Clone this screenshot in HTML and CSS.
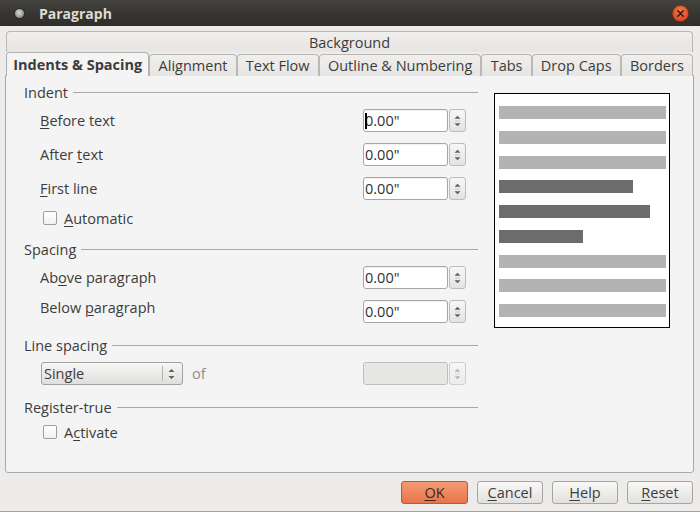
FILE: index.html
```html
<!DOCTYPE html>
<html lang="en">
<head>
<meta charset="utf-8">
<title>Paragraph</title>
<link rel="stylesheet" href="styles.css">
</head>
<body>
<div class="window">
  <header class="titlebar">
    <span class="win-dot"></span>
    <span class="title">Paragraph</span>
    <span class="close">
      <svg width="17" height="17" viewBox="0 0 17 17">
        <defs>
          <radialGradient id="cg" cx="50%" cy="35%" r="65%">
            <stop offset="0" stop-color="#f47a4e"/>
            <stop offset="1" stop-color="#d9441b"/>
          </radialGradient>
        </defs>
        <circle cx="8.5" cy="8.5" r="8" fill="url(#cg)" stroke="#8e2a0c" stroke-width="0.6"/>
        <path d="M5.8 5.8 L11.2 11.2 M11.2 5.8 L5.8 11.2" stroke="#3a1408" stroke-width="1.5" stroke-linecap="round"/>
      </svg>
    </span>
  </header>

  <main class="dialog">
    <div class="notebook">
      <div class="tabrow tabrow-back">
        <div class="tab tab-back">Background</div>
      </div>
      <div class="tabrow tabrow-front">
        <div class="tab active">Indents &amp; Spacing</div>
        <div class="tab">Alignment</div>
        <div class="tab">Text Flow</div>
        <div class="tab">Outline &amp; Numbering</div>
        <div class="tab">Tabs</div>
        <div class="tab">Drop Caps</div>
        <div class="tab">Borders</div>
      </div>

      <div class="panel">
        <div class="form">
          <section class="group">
            <h3 class="group-title">Indent</h3>
            <div class="row">
              <span class="label"><u>B</u>efore text</span>
              <div class="spin">
                <div class="spin-entry"><span class="cursor"></span>0.00"</div>
                <div class="spin-btns"><svg width="7" height="12" viewBox="0 0 7 12"><polygon points="0.5,3.8 3.5,0.8 6.5,3.8" fill="#5f5f5f"/><line x1="1" y1="6" x2="6" y2="6" stroke="#c9c9c9"/><polygon points="0.5,8.2 3.5,11.2 6.5,8.2" fill="#5f5f5f"/></svg></div>
              </div>
            </div>
            <div class="row">
              <span class="label">After <u>t</u>ext</span>
              <div class="spin">
                <div class="spin-entry">0.00"</div>
                <div class="spin-btns"><svg width="7" height="12" viewBox="0 0 7 12"><polygon points="0.5,3.8 3.5,0.8 6.5,3.8" fill="#5f5f5f"/><line x1="1" y1="6" x2="6" y2="6" stroke="#c9c9c9"/><polygon points="0.5,8.2 3.5,11.2 6.5,8.2" fill="#5f5f5f"/></svg></div>
              </div>
            </div>
            <div class="row">
              <span class="label"><u>F</u>irst line</span>
              <div class="spin">
                <div class="spin-entry">0.00"</div>
                <div class="spin-btns"><svg width="7" height="12" viewBox="0 0 7 12"><polygon points="0.5,3.8 3.5,0.8 6.5,3.8" fill="#5f5f5f"/><line x1="1" y1="6" x2="6" y2="6" stroke="#c9c9c9"/><polygon points="0.5,8.2 3.5,11.2 6.5,8.2" fill="#5f5f5f"/></svg></div>
              </div>
            </div>
            <div class="check-row">
              <span class="checkbox"></span>
              <span class="check-label"><u>A</u>utomatic</span>
            </div>
          </section>

          <section class="group">
            <h3 class="group-title">Spacing</h3>
            <div class="row">
              <span class="label">Ab<u>o</u>ve paragraph</span>
              <div class="spin">
                <div class="spin-entry">0.00"</div>
                <div class="spin-btns"><svg width="7" height="12" viewBox="0 0 7 12"><polygon points="0.5,3.8 3.5,0.8 6.5,3.8" fill="#5f5f5f"/><line x1="1" y1="6" x2="6" y2="6" stroke="#c9c9c9"/><polygon points="0.5,8.2 3.5,11.2 6.5,8.2" fill="#5f5f5f"/></svg></div>
              </div>
            </div>
            <div class="row row-top">
              <span class="label">Below <u>p</u>aragraph</span>
              <div class="spin">
                <div class="spin-entry">0.00"</div>
                <div class="spin-btns"><svg width="7" height="12" viewBox="0 0 7 12"><polygon points="0.5,3.8 3.5,0.8 6.5,3.8" fill="#5f5f5f"/><line x1="1" y1="6" x2="6" y2="6" stroke="#c9c9c9"/><polygon points="0.5,8.2 3.5,11.2 6.5,8.2" fill="#5f5f5f"/></svg></div>
              </div>
            </div>
          </section>

          <section class="group">
            <h3 class="group-title">Line spacing</h3>
            <div class="row row-combo">
              <div class="combo">
                <span class="combo-text">Single</span>
                <span class="combo-sep"></span>
                <svg class="combo-arrows" width="7" height="12" viewBox="0 0 7 12"><polygon points="0.5,4 3.5,1 6.5,4" fill="#5f5f5f"/><polygon points="0.5,8 3.5,11 6.5,8" fill="#5f5f5f"/></svg>
              </div>
              <span class="of-label">of</span>
              <div class="spin spin-disabled">
                <div class="spin-entry"></div>
                <div class="spin-btns"><svg width="7" height="12" viewBox="0 0 7 12"><polygon points="0.5,3.8 3.5,0.8 6.5,3.8" fill="#b4b4b4"/><line x1="1" y1="6" x2="6" y2="6" stroke="#dcdcdc"/><polygon points="0.5,8.2 3.5,11.2 6.5,8.2" fill="#b4b4b4"/></svg></div>
              </div>
            </div>
          </section>

          <section class="group">
            <h3 class="group-title">Register-true</h3>
            <div class="check-row">
              <span class="checkbox"></span>
              <span class="check-label">A<u>c</u>tivate</span>
            </div>
          </section>
        </div>

        <div class="preview">
          <div class="bar"></div>
          <div class="bar"></div>
          <div class="bar"></div>
          <div class="bar bar-dark bar-w1"></div>
          <div class="bar bar-dark bar-w2"></div>
          <div class="bar bar-dark bar-w3"></div>
          <div class="bar"></div>
          <div class="bar"></div>
          <div class="bar"></div>
        </div>
      </div>
    </div>

    <footer class="buttons">
      <button class="btn btn-default"><u>O</u>K</button>
      <button class="btn"><u>C</u>ancel</button>
      <button class="btn"><u>H</u>elp</button>
      <button class="btn"><u>R</u>eset</button>
    </footer>
  </main>
</div>
</body>
</html>
```

FILE: styles.css
```css
* { box-sizing: border-box; }

html, body {
  margin: 0;
  padding: 0;
}

body {
  width: 700px;
  height: 512px;
  overflow: hidden;
  background: #edecea;
  font-family: "Open Sans", "DejaVu Sans", sans-serif;
  font-size: 14.5px;
  color: #3c3c3c;
}

u { text-decoration: underline; text-underline-offset: 2px; text-decoration-thickness: 1px; }

.window {
  width: 700px;
  height: 512px;
  display: flex;
  flex-direction: column;
  border-bottom: 1px solid #a3a3a1;
}

/* Title bar */
.titlebar {
  height: 26px;
  flex: none;
  display: flex;
  align-items: center;
  background: linear-gradient(#43423e, #353430 60%, #2f2e2b);
  padding-left: 15px;
  padding-right: 11px;
}

.win-dot {
  width: 9px;
  height: 9px;
  border-radius: 50%;
  background: radial-gradient(circle at 45% 40%, #d8d8d4 0, #a9a9a5 45%, #6b6a66 100%);
  box-shadow: 0 0 0 1px #2a2926;
}

.title {
  margin-left: 15px;
  font-weight: bold;
  font-size: 14px;
  color: #dfdbd2;
}

.close {
  margin-left: auto;
  width: 17px;
  height: 17px;
  display: flex;
}

/* Dialog */
.dialog {
  flex: 1;
  display: flex;
  flex-direction: column;
}

.notebook {
  margin: 5px 6px 0 5px;
  display: flex;
  flex-direction: column;
}

.tabrow {
  display: flex;
  padding: 0 1px 0 1px;
}

.tabrow-back { height: 21px; }

.tab {
  display: flex;
  align-items: center;
  justify-content: center;
  border: 1px solid #b9b8b5;
  border-bottom: none;
  border-radius: 4px 4px 0 0;
  background: linear-gradient(#f0efee, #e6e5e3);
  white-space: nowrap;
}

.tab-back {
  flex: 1;
  padding-top: 1px;
}

.tabrow-front {
  height: 24px;
  align-items: flex-end;
  position: relative;
  z-index: 1;
  margin-bottom: -1px;
}

.tabrow-front .tab {
  height: 22px;
  flex: 1 1 auto;
  padding: 0 7px;
}

.tabrow-front .tab.active {
  height: 24px;
  font-weight: bold;
  background: #f4f4f4;
  border-color: #b1b0ae;
  padding: 0 5px;
}

.panel {
  height: 398px;
  border: 1px solid #a9a8a6;
  border-radius: 0 0 3px 3px;
  background: #f4f4f4;
  display: flex;
  align-items: flex-start;
  padding: 7px 0 0 18px;
}

.form {
  width: 454px;
  flex: none;
}

.group + .group { margin-top: 13px; }

.group-title {
  margin: 0;
  height: 18px;
  display: flex;
  align-items: center;
  font-size: 14.5px;
  font-weight: normal;
  white-space: nowrap;
}

.group-title::after {
  content: "";
  flex: 1;
  height: 0;
  border-top: 1px solid #a8a8a8;
  margin-left: 5px;
  margin-top: 1px;
}

.row {
  height: 23px;
  display: flex;
  align-items: center;
  padding-left: 16px;
}

.group-title + .row { margin-top: 8px; }
.row + .row { margin-top: 11px; }

.row-top { align-items: flex-start; }
.row-top .label { line-height: 15px; }

.label {
  width: 323px;
  flex: none;
  white-space: nowrap;
}

.spin {
  display: flex;
  gap: 1px;
  height: 23px;
}

.spin-entry {
  width: 85px;
  height: 23px;
  border: 1px solid #a6a6a4;
  border-radius: 3px;
  background: #fff;
  display: flex;
  align-items: center;
  padding-left: 1px;
  color: #2f2f2f;
  box-shadow: inset 0 1px 1px rgba(0,0,0,0.06);
}

.cursor {
  width: 2px;
  height: 16px;
  background: #000;
  margin-right: -2px;
  position: relative;
  z-index: 1;
}

.spin-btns {
  width: 17px;
  height: 23px;
  border: 1px solid #bdbcba;
  border-radius: 3px;
  background: linear-gradient(#f7f7f6, #e4e3e1);
  display: flex;
  align-items: center;
  justify-content: center;
}

.spin-disabled .spin-entry {
  background: #e7e7e6;
  border-color: #c0bfbd;
  box-shadow: none;
}

.spin-disabled .spin-btns {
  background: linear-gradient(#f6f6f5, #ebebea);
  border-color: #cfcecc;
}

.row-combo { padding-left: 17px; }

.combo {
  width: 142px;
  height: 23px;
  border: 1px solid #a3a2a0;
  border-radius: 3px;
  background: linear-gradient(#f6f6f5, #e0dfdd);
  display: flex;
  align-items: center;
  padding-left: 2px;
}

.combo-text { flex: 1; }

.combo-sep {
  width: 1px;
  height: 15px;
  background: #b6b5b3;
  margin-right: 5px;
}

.combo-arrows { margin-right: 7px; }

.of-label {
  margin-left: 9px;
  color: #8d8d8b;
}

.row-combo .spin { margin-left: auto; margin-right: 12px; }

.check-row {
  height: 18px;
  display: flex;
  align-items: center;
  padding-left: 19px;
}

.row + .check-row { margin-top: 9px; }
.group-title + .check-row { margin-top: 7px; }

.checkbox {
  width: 14px;
  height: 14px;
  border: 1px solid #9e9d9b;
  border-radius: 2px;
  background: linear-gradient(#ffffff, #f1f1f0);
}

.check-label { margin-left: 7px; }

/* Preview */
.preview {
  margin-left: 16px;
  margin-top: 10px;
  width: 176px;
  height: 235px;
  border: 1px solid #000;
  background: #fff;
  padding: 12px 3px 0 4px;
  display: flex;
  flex-direction: column;
  gap: 11.75px;
}

.bar {
  height: 13px;
  width: 100%;
  background: #b3b3b3;
  flex: none;
}

.bar-dark { background: #6c6c6c; }
.bar-w1 { width: 134px; }
.bar-w2 { width: 151px; }
.bar-w3 { width: 84px; }

/* Buttons */
.buttons {
  display: flex;
  justify-content: flex-end;
  gap: 9px;
  padding: 8px 7px 0 0;
}

.btn {
  width: 66px;
  height: 23px;
  border: 1px solid #a6a5a3;
  border-radius: 3px;
  background: linear-gradient(#f8f8f7, #e2e1df);
  font-family: inherit;
  font-size: 14.5px;
  color: #3c3c3c;
  padding: 0;
  display: flex;
  align-items: center;
  justify-content: center;
}

.btn-default {
  width: 67px;
  border-color: #c4572e;
  background: linear-gradient(#f39a73, #e9744a);
  color: #3a2a22;
}
```
